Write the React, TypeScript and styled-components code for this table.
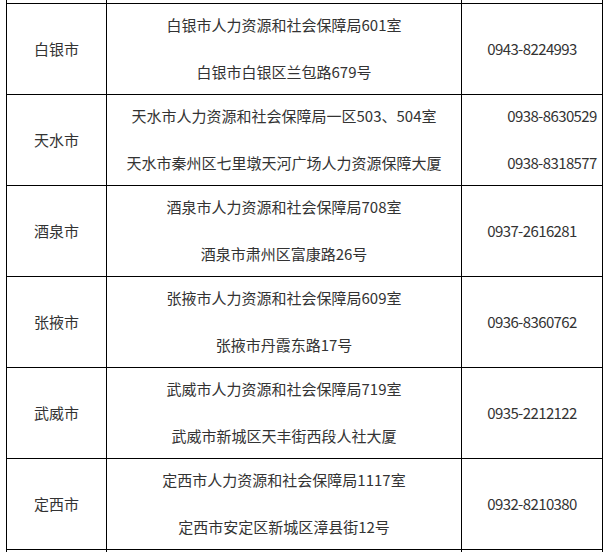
import React from 'react';
import styled, { createGlobalStyle } from 'styled-components';

const GlobalStyle = createGlobalStyle`
  html, body {
    margin: 0;
    padding: 0;
    background: #fff;
    overflow: hidden;
  }
`;

const Page = styled.div`
  padding-left: 6px;
  font-family: 'Noto Sans CJK SC', 'Liberation Sans', sans-serif;
  font-size: 15px;
  color: #333;
`;

const Table = styled.table`
  width: 596px;
  border-collapse: collapse;
  table-layout: fixed;
`;

const Row = styled.tr<{ $h?: number }>`
  height: ${(p) => p.$h ?? 91}px;
`;

const Cell = styled.td<{ $open?: boolean }>`
  border: 1px solid #000;
  border-top: ${(p) => (p.$open ? 'none' : '1px solid #000')};
  padding: 0;
  text-align: center;
  vertical-align: middle;
`;

const Lines = styled.div<{ $indent?: number }>`
  display: flex;
  flex-direction: column;
  align-items: center;
  gap: 25px;
  padding-left: ${(p) => p.$indent ?? 0}px;
`;

const Line = styled.span`
  line-height: 22px;
  white-space: nowrap;
`;

const Phone = styled(Line)`
  letter-spacing: -0.6px;
`;

interface Office {
  city: string;
  office: string;
  address: string;
  phones: string[];
  indent?: number;
}

const offices: Office[] = [
  {
    city: '白银市',
    office: '白银市人力资源和社会保障局601室',
    address: '白银市白银区兰包路679号',
    phones: ['0943-8224993'],
  },
  {
    city: '天水市',
    office: '天水市人力资源和社会保障局一区503、504室',
    address: '天水市秦州区七里墩天河广场人力资源保障大厦',
    phones: ['0938-8630529', '0938-8318577'],
    indent: 40,
  },
  {
    city: '酒泉市',
    office: '酒泉市人力资源和社会保障局708室',
    address: '酒泉市肃州区富康路26号',
    phones: ['0937-2616281'],
  },
  {
    city: '张掖市',
    office: '张掖市人力资源和社会保障局609室',
    address: '张掖市丹霞东路17号',
    phones: ['0936-8360762'],
  },
  {
    city: '武威市',
    office: '武威市人力资源和社会保障局719室',
    address: '武威市新城区天丰街西段人社大厦',
    phones: ['0935-2212122'],
  },
  {
    city: '定西市',
    office: '定西市人力资源和社会保障局1117室',
    address: '定西市安定区新城区漳县街12号',
    phones: ['0932-8210380'],
  },
];

const App: React.FC = () => (
  <Page>
    <GlobalStyle />
    <Table>
      <colgroup>
        <col style={{ width: 100 }} />
        <col style={{ width: 355 }} />
        <col style={{ width: 141 }} />
      </colgroup>
      <tbody>
        <Row $h={3}>
          <Cell $open />
          <Cell $open />
          <Cell $open />
        </Row>
        {offices.map((o) => (
          <Row key={o.city}>
            <Cell>
              <Line>{o.city}</Line>
            </Cell>
            <Cell>
              <Lines>
                <Line>{o.office}</Line>
                <Line>{o.address}</Line>
              </Lines>
            </Cell>
            <Cell>
              <Lines $indent={o.indent}>
                {o.phones.map((p) => (
                  <Phone key={p}>{p}</Phone>
                ))}
              </Lines>
            </Cell>
          </Row>
        ))}
        <Row>
          <Cell />
          <Cell />
          <Cell />
        </Row>
      </tbody>
    </Table>
  </Page>
);

export default App;
